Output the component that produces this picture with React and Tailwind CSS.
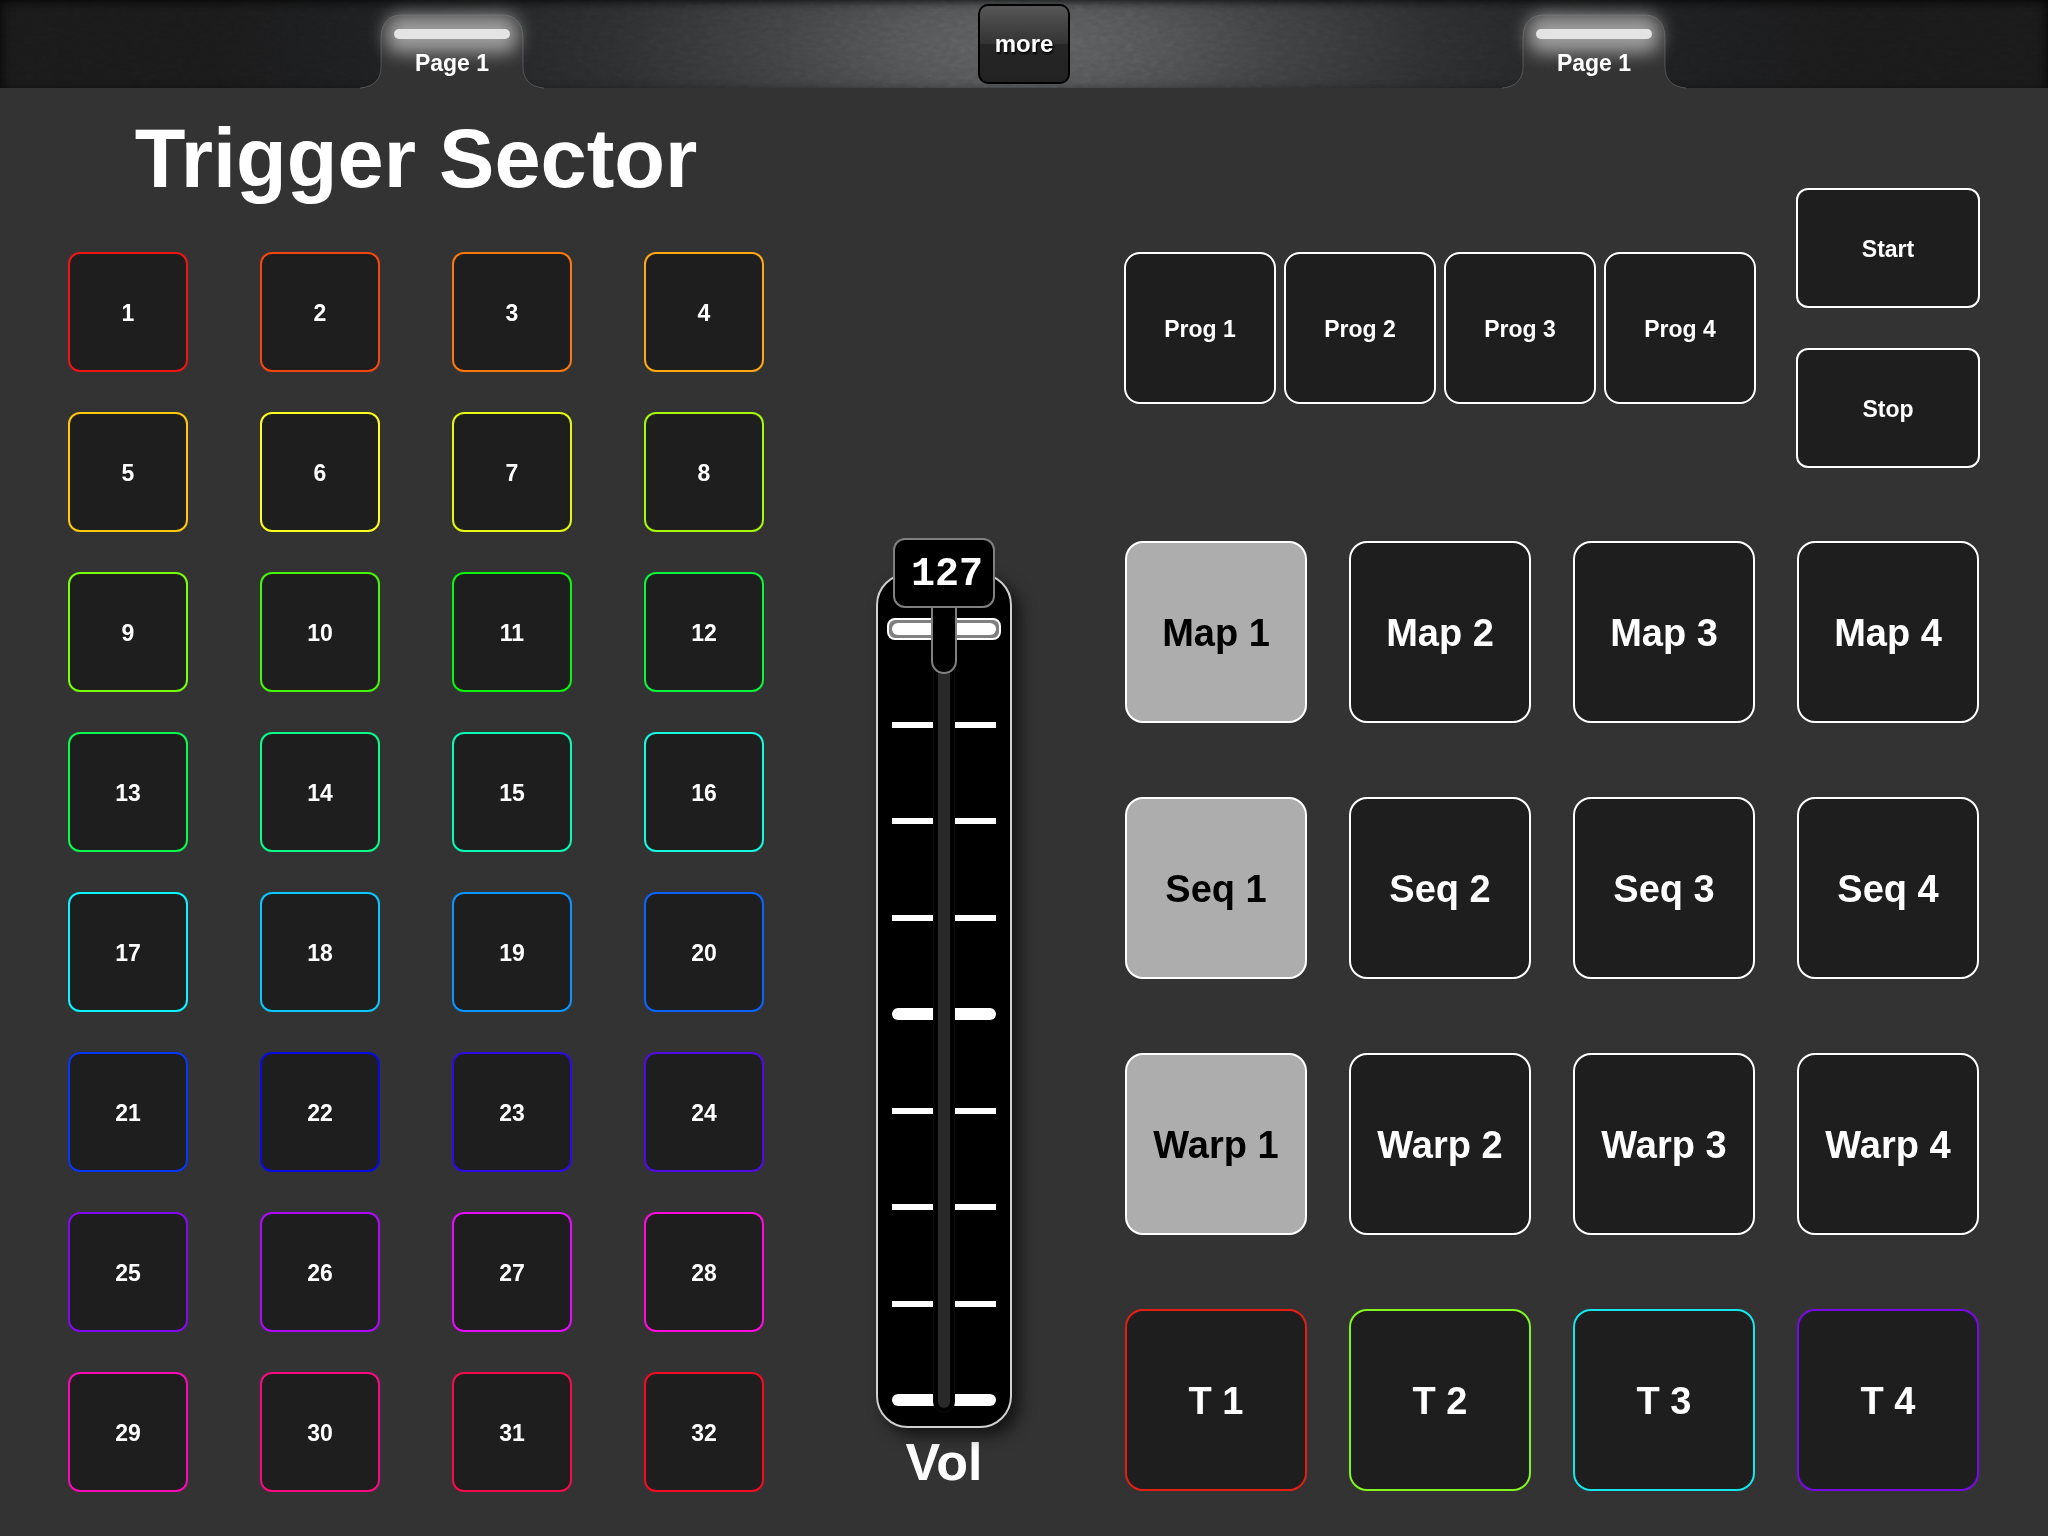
const PADS = [
  'border-[#f01414]', 'border-[#f5460f]', 'border-[#fa780f]', 'border-[#ffa814]',
  'border-[#ffc80f]', 'border-[#ffff1e]', 'border-[#e1fa0f]', 'border-[#a5fa0a]',
  'border-[#78ff0a]', 'border-[#46f50a]', 'border-[#0af50a]', 'border-[#0af53c]',
  'border-[#0afa50]', 'border-[#0afa8c]', 'border-[#0afab4]', 'border-[#14fae1]',
  'border-[#0af5ff]', 'border-[#0ac8ff]', 'border-[#0a96ff]', 'border-[#0a64ff]',
  'border-[#0a37f5]', 'border-[#0a0ae6]', 'border-[#2d0ae6]', 'border-[#500ae6]',
  'border-[#820af0]', 'border-[#af0afa]', 'border-[#e60aff]', 'border-[#ff0adc]',
  'border-[#fa0ab4]', 'border-[#fa0a82]', 'border-[#f50a50]', 'border-[#f50a23]',
];

const SCENES = ['Map', 'Seq', 'Warp'];
const TRIGGERS = ['border-[#e61e14]', 'border-[#82f51e]', 'border-[#14e6eb]', 'border-[#780ae6]'];

function Pad({ children, className = '' }) {
  return (
    <button
      type="button"
      className={`flex items-center justify-center border-2 pt-[2px] font-bold ${className}`}
    >
      {children}
    </button>
  );
}

function Tab() {
  return (
    <button type="button" className="relative mt-[15px] flex h-[73px] w-[184px] flex-col items-center">
      <svg viewBox="0 0 184 73" className="absolute inset-0 h-full w-full overflow-visible" aria-hidden="true">
        <defs>
          <filter id="glow" x="-30%" y="-400%" width="160%" height="900%">
            <feGaussianBlur stdDeviation="9" />
          </filter>
        </defs>
        <path
          d="M0 73 C14 72 21 64 21 52 V24 C21 9 28 0 42 0 H142 C156 0 163 9 163 24 V52 C163 64 170 72 184 73 Z"
          fill="#333333"
        />
        <rect x="26" y="0" width="132" height="38" rx="14" fill="#b0b0b0" opacity="0.85" filter="url(#glow)" />
        <path
          d="M0 73 C14 72 21 64 21 52 V24 C21 9 28 0 42 0 H142 C156 0 163 9 163 24 V52 C163 64 170 72 184 73"
          fill="none"
          stroke="#909090"
          strokeOpacity="0.4"
        />
      </svg>
      <span className="relative mt-[14px] h-[10px] w-[116px] rounded-full bg-[#e4e4e4]" />
      <span className="relative mt-[10px] text-[23px] leading-[28px] font-bold">Page 1</span>
    </button>
  );
}

function Header() {
  return (
    <header className="relative h-[88px] bg-[radial-gradient(ellipse_50%_400%_at_50%_50%,#5e6061_0%,#535556_12%,#404243_24%,#2c2e2f_40%,#202122_58%,#1a1a1b_80%)]">
      <svg className="absolute inset-0 h-full w-full opacity-20 mix-blend-overlay" aria-hidden="true">
        <filter id="grain">
          <feTurbulence type="fractalNoise" baseFrequency="0.12 0.25" numOctaves="3" seed="4" />
          <feColorMatrix type="saturate" values="0" />
        </filter>
        <rect width="100%" height="100%" filter="url(#grain)" />
      </svg>
      <div className="absolute inset-0 shadow-[inset_0_6px_8px_-4px_rgba(0,0,0,0.6),inset_8px_0_12px_-6px_rgba(0,0,0,0.6),inset_-8px_0_12px_-6px_rgba(0,0,0,0.6)]" />
      <nav className="relative grid grid-cols-[1fr_92px_1fr]">
        <div className="flex pl-[360px]">
          <Tab />
        </div>
        <button
          type="button"
          className="mt-[4px] h-[80px] rounded-[10px] border-2 border-black bg-[linear-gradient(#565656,#333333_50%,#262626_50%,#222222)] text-[24px] font-bold [text-shadow:1px_2px_2px_#000]"
        >
          more
        </button>
        <div className="flex justify-end pr-[362px]">
          <Tab />
        </div>
      </nav>
    </header>
  );
}

function Fader() {
  return (
    <div className="flex flex-col items-center">
      <div className="relative flex h-[855px] w-[136px] flex-col rounded-[32px] border-2 border-[#d0d0d0] bg-black shadow-[8px_8px_16px_rgba(0,0,0,0.6)]">
        <div className="absolute inset-x-[14px] top-[47px] bottom-[20px] flex flex-col justify-between">
          {[0, 1, 2, 3, 4, 5, 6, 7, 8].map((i) => (
            <div key={i} className="flex h-[12px] items-center justify-between">
              <span className={i % 4 === 0 ? 'h-[12px] w-[42px] rounded-l-full bg-white' : 'h-[6px] w-[42px] bg-white'} />
              <span className={i % 4 === 0 ? 'h-[12px] w-[42px] rounded-r-full bg-white' : 'h-[6px] w-[42px] bg-white'} />
            </div>
          ))}
        </div>
        <div className="absolute top-[43px] left-[9px] h-[22px] w-[114px] rounded-[8px] border-2 border-white bg-[#808080] p-[3px]">
          <div className="h-[12px] rounded-full bg-white" />
        </div>
        <div className="absolute top-[40px] bottom-[14px] left-[56px] w-[20px] rounded-b-full border-4 border-t-0 border-black bg-[#292929] outline-1 outline-[#0c0c0c]" />
        <div className="absolute top-[20px] left-[53px] h-[79px] w-[26px] rounded-b-full border-2 border-[#808080] bg-black" />
        <output
          htmlFor="volume"
          className="absolute -top-[37px] left-[15px] flex h-[70px] w-[102px] items-center justify-end rounded-[12px] border-2 border-[#808080] bg-black pt-[4px] pr-[10px] font-['Liberation_Mono',monospace] text-[40px] font-bold"
        >
          127
        </output>
        <input
          id="volume"
          type="range"
          min="0"
          max="127"
          defaultValue="127"
          className="absolute inset-0 h-full w-full opacity-0 [direction:rtl] [writing-mode:vertical-lr]"
        />
      </div>
      <label htmlFor="volume" className="mt-[4px] text-[52px] leading-[60px] font-bold">
        Vol
      </label>
    </div>
  );
}

export default function App() {
  return (
    <div className="min-h-screen bg-[#333333] font-['Liberation_Sans',Arial,sans-serif] text-white">
      <Header />
      <main className="grid grid-cols-[696fr_136fr_856fr] gap-x-[112px] px-[68px] pb-[44px]">
        <section>
          <h1 className="mt-[23px] mb-[45px] text-center text-[83px] leading-[96px] font-bold">Trigger Sector</h1>
          <div className="grid grid-cols-4 gap-x-[72px] gap-y-[40px]">
            {PADS.map((color, i) => (
              <Pad key={color} className={`h-[120px] rounded-[12px] bg-[#1e1e1e] text-[23px] ${color}`}>
                {i + 1}
              </Pad>
            ))}
          </div>
        </section>
        <section className="pt-[485px]">
          <Fader />
        </section>
        <section>
          <div className="mt-[100px] flex justify-between">
            <div className="mt-[64px] flex gap-[8px]">
              {[1, 2, 3, 4].map((n) => (
                <Pad key={n} className="h-[152px] w-[152px] rounded-[16px] border-white bg-[#1e1e1e] text-[23px]">
                  Prog {n}
                </Pad>
              ))}
            </div>
            <div className="flex w-[184px] flex-col gap-[40px]">
              {['Start', 'Stop'].map((label) => (
                <Pad key={label} className="h-[120px] rounded-[12px] border-white bg-[#1e1e1e] text-[23px]">
                  {label}
                </Pad>
              ))}
            </div>
          </div>
          <div className="mt-[73px] grid grid-cols-4 gap-x-[42px] gap-y-[74px] px-px">
            {SCENES.flatMap((name) =>
              [1, 2, 3, 4].map((n) => (
                <Pad
                  key={name + n}
                  className={`h-[182px] rounded-[18px] border-white text-[38px] ${n === 1 ? 'bg-[#adadad] text-black' : 'bg-[#1e1e1e]'}`}
                >
                  {name} {n}
                </Pad>
              ))
            )}
            {TRIGGERS.map((color, i) => (
              <Pad key={color} className={`h-[182px] rounded-[18px] bg-[#1e1e1e] text-[38px] ${color}`}>
                T {i + 1}
              </Pad>
            ))}
          </div>
        </section>
      </main>
    </div>
  );
}
